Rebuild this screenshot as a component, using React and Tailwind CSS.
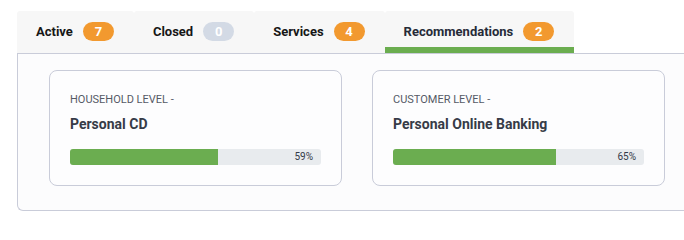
import React from "react";

const tabs = [
  { label: "Active", count: 7, badge: "bg-[#f2992f]", active: false },
  { label: "Closed", count: 0, badge: "bg-[#d3dae5]", active: false },
  { label: "Services", count: 4, badge: "bg-[#f2992f]", active: false },
  { label: "Recommendations", count: 2, badge: "bg-[#f2992f]", active: true },
];

const cards = [
  { level: "HOUSEHOLD LEVEL -", title: "Personal CD", pct: 59 },
  { level: "CUSTOMER LEVEL -", title: "Personal Online Banking", pct: 65 },
];

export default function App() {
  return (
    <div
      className="w-[684px] h-[226px] overflow-hidden bg-white"
      style={{ fontFamily: "Roboto, 'Liberation Sans', sans-serif" }}
    >
      <div className="pt-[11px] pl-[17px]">
        <div className="flex">
          {tabs.map((t) => (
            <div
              key={t.label}
              className={
                "flex items-center gap-[10px] pl-[19px] pr-[20px] pt-[11px] pb-[6px] bg-[#f7f7f7] rounded-t-[3px] border-b-[6px] " +
                (t.active ? "border-[#6bad4f] text-[#262b38]" : "border-transparent text-[#161616]")
              }
            >
              <span className="text-[13px] font-bold leading-[19px]">{t.label}</span>
              <span
                className={
                  "w-[31px] h-[19px] rounded-full flex items-center justify-center text-white text-[13px] font-bold " +
                  t.badge
                }
              >
                {t.count}
              </span>
            </div>
          ))}
        </div>
        <div className="w-[700px] h-[158px] border-t border-l border-b border-[#c9ccd9] rounded-bl-[6px] bg-[#fcfcfd] pt-4 pl-[31px] flex gap-[30px]">
          {cards.map((c) => (
            <div
              key={c.title}
              className="w-[293px] h-[116px] border border-[#c9ccd9] rounded-[8px] bg-[#fdfdfe] p-5"
            >
              <div className="text-[11px] leading-[18px] text-[#555a66]">{c.level}</div>
              <div className="mt-[5px] text-[14px] leading-[20px] font-bold text-[#363b47]">
                {c.title}
              </div>
              <div className="mt-[15px] h-4 rounded-[3px] bg-[#e8ebee] relative overflow-hidden">
                <div className="h-full bg-[#6bad50]" style={{ width: `${c.pct}%` }} />
                <span className="absolute right-[8px] top-0 leading-4 text-[10px] text-[#333a48]">
                  {c.pct}%
                </span>
              </div>
            </div>
          ))}
        </div>
      </div>
    </div>
  );
}
